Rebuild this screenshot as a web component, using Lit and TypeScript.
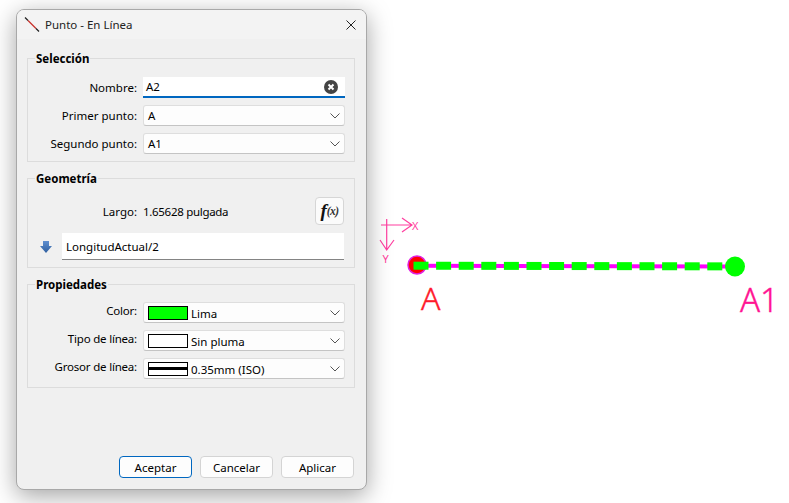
import { LitElement, html, css, svg } from "lit";
import { customElement } from "lit/decorators.js";

const chevron = html`<svg class="chev" width="10" height="6" viewBox="0 0 10 6"><path d="M0.5 0.5 L5 5 L9.5 0.5" fill="none" stroke="#555" stroke-width="1"/></svg>`;

const dashes: number[] = [];
for (let i = 0; i < 14; i++) dashes.push(413.5 + i * 22.6);

@customElement("app-root")
export class AppRoot extends LitElement {
  static styles = css`
    :host { display: block; width: 789px; height: 503px; position: relative; overflow: hidden; background: #fff;
      font-family: "Noto Sans", "Open Sans", sans-serif; font-size: 11.5px; color: #000; }
    .canvas { position: absolute; left: 0; top: 0; }
    .stage { position: relative; padding: 9px 0 0 16px; }
    .window { width: 351px; height: 481px; box-sizing: border-box; display: flex; flex-direction: column; background: #f0f0f0;
      border: 1px solid #a8a8a8; border-radius: 8px; box-shadow: 0 6px 24px rgba(0,0,0,.36); overflow: hidden; }
    .titlebar { height: 29px; box-sizing: border-box; flex: none; display: flex; align-items: center; background: #f3f3f3; padding: 0 10px 0 7px; gap: 5px; color: #222; }
    .titlebar .t { flex: 1; padding-bottom: 1px; }
    .body { flex: 1; display: flex; flex-direction: column; padding: 19px 11px 11px 10px; gap: 16px; }
    .group { border: 1px solid #dcdcdc; padding: 0 10px 7px 0; }
    .gt { height: 16px; line-height: 16px; margin: -8px 0 10px 7px; padding: 0 1px; width: fit-content; background: #f0f0f0; font-weight: 700; }
    .props { padding-bottom: 8px; }
    .props .gt { margin-bottom: 9px; }
    .rows { display: flex; flex-direction: column; gap: 7px; }
    .row { display: grid; grid-template-columns: 109px 202px; column-gap: 6px; align-items: center; height: 21px; }
    .lab { text-align: right; white-space: nowrap; }
    .val { text-align: left; white-space: nowrap; letter-spacing: -0.3px; }
    .props .lab { padding-bottom: 4px; letter-spacing: -0.2px; }
    .props .v { padding-top: 2px; }
    .combo { height: 21px; box-sizing: border-box; display: flex; align-items: center; gap: 3px; background: #fdfdfd; border: 1px solid #dedede; border-bottom-color: #c4c4c4;
      border-radius: 3px; padding: 0 3px 0 4px; }
    .combo .v { flex: 1; }
    .chev { margin-right: 1px; }
    .input { height: 21px; box-sizing: border-box; display: flex; align-items: center; background: #fff; border-bottom: 2px solid #0067c0; padding: 0 7px 0 3px; }
    .input .v { flex: 1; }
    .swatch { width: 38px; height: 12px; border: 1px solid #000; flex: none; background: #fff; }
    .lime { background: #00ff00; }
    .thick { display: flex; align-items: center; }
    .thick i { display: block; width: 100%; height: 3px; background: #000; }
    .georow { display: grid; grid-template-columns: 109px 1fr 29px; column-gap: 6px; align-items: center; height: 28px; }
    .fx { width: 29px; height: 28px; box-sizing: border-box; display: flex; align-items: center; justify-content: center; background: #fbfbfb; border: 1px solid #d6d6d6; border-radius: 4px;
      font-family: "Liberation Serif", serif; font-weight: 700; font-style: italic; font-size: 19px; color: #111; }
    .fx small { font-size: 11.5px; color: #333; letter-spacing: -0.5px; }
    .formrow { display: grid; grid-template-columns: 12px 282px; column-gap: 10px; align-items: center; padding-left: 12px; margin-top: 8px; }
    .forminput { height: 27px; box-sizing: border-box; background: #fff; border-bottom: 1px solid #848484; padding: 0 4px; display: flex; align-items: center; }
    .foot { margin-top: auto; display: flex; justify-content: flex-end; gap: 8px; padding-right: 1px; }
    .btn { width: 73px; height: 22px; box-sizing: border-box; display: flex; align-items: center; justify-content: center; background: #fdfdfd; border: 1px solid #d4d4d4; border-radius: 4px; }
    .btn.def { border-color: #0067c0; }
    .lbl { font-family: "Noto Sans", sans-serif; }
  `;

  render() {
    return html`
      <svg class="canvas" width="789" height="503" viewBox="0 0 789 503">
        <g stroke="#ff3fa0" stroke-width="1.2" fill="none">
          <path d="M381 225 H412 M402 218 L412 225 L402 232"/>
          <path d="M386.7 219 V250 M380 240 L386.7 250 L394 240"/>
        </g>
        <text class="lbl" x="412" y="229.500" font-size="11" fill="#ff3fa0">X</text>
        <text class="lbl" x="382.500" y="263" font-size="11" fill="#ff3fa0">Y</text>
        <circle cx="417" cy="265" r="9" fill="#f00" stroke="#e020e0" stroke-width="1.500"/>
        <path d="M417 265.700 L735 266.400" stroke="#ff00ff" stroke-width="4"/>
        ${dashes.map((x, i) => svg`<rect x=${x} y=${261.7 + i * 0.05} width="15" height="8" fill="#00ff00"/>`)}
        <circle cx="735" cy="266.500" r="10" fill="#00ff00"/>
        <text class="lbl" x="421" y="310" font-size="32" font-weight="300" fill="#ff1a2a" stroke="#ff1a2a" stroke-width="0.4">A</text>
        <text class="lbl" x="740" y="312" font-size="33" font-weight="300" fill="#ff1493" stroke="#ff1493" stroke-width="0.4">A1</text>
      </svg>
      <div class="stage">
        <div class="window">
          <div class="titlebar">
            <svg width="16" height="16" viewBox="0 0 16 16"><path d="M1 0.500 L4 3.500" stroke="#222" stroke-width="1.300"/><path d="M4 3.500 L12 11.500" stroke="#c8302a" stroke-width="1.300"/><path d="M12 11.500 L15 14.500" stroke="#222" stroke-width="1.300"/></svg>
            <span class="t">Punto - En Línea</span>
            <svg width="10" height="10" viewBox="0 0 10 10"><path d="M0.500 0.500 L9.500 9.500 M9.500 0.500 L0.500 9.500" stroke="#222" stroke-width="1"/></svg>
          </div>
          <div class="body">
            <div class="group">
              <div class="gt">Selección</div>
              <div class="rows">
                <div class="row"><span class="lab">Nombre:</span>
                  <div class="input"><span class="v">A2</span>
                    <svg width="14" height="14" viewBox="0 0 14 14"><circle cx="7" cy="7" r="7" fill="#444"/><path d="M4.500 4.500 L9.500 9.500 M9.500 4.500 L4.500 9.500" stroke="#fff" stroke-width="2"/></svg>
                  </div></div>
                <div class="row"><span class="lab">Primer punto:</span><div class="combo"><span class="v">A</span>${chevron}</div></div>
                <div class="row"><span class="lab">Segundo punto:</span><div class="combo"><span class="v">A1</span>${chevron}</div></div>
              </div>
            </div>
            <div class="group">
              <div class="gt">Geometría</div>
              <div class="georow"><span class="lab">Largo:</span><span class="val">1.65628 pulgada</span>
                <div class="fx">f<small>(x)</small></div></div>
              <div class="formrow">
                <svg width="12" height="12" viewBox="0 0 12 12"><defs><linearGradient id="ag" x1="0" y1="0" x2="0" y2="1"><stop offset="0" stop-color="#5f8fd0"/><stop offset="1" stop-color="#2f5f9f"/></linearGradient></defs><path d="M3 0 H9 V5 H12 L6 12 L0 5 H3 Z" fill="url(#ag)"/></svg>
                <div class="forminput">LongitudActual/2</div>
              </div>
            </div>
            <div class="group props">
              <div class="gt">Propiedades</div>
              <div class="rows">
                <div class="row"><span class="lab">Color:</span><div class="combo"><span class="swatch lime"></span><span class="v">Lima</span>${chevron}</div></div>
                <div class="row"><span class="lab">Tipo de línea:</span><div class="combo"><span class="swatch"></span><span class="v">Sin pluma</span>${chevron}</div></div>
                <div class="row"><span class="lab">Grosor de línea:</span><div class="combo"><span class="swatch thick"><i></i></span><span class="v">0.35mm (ISO)</span>${chevron}</div></div>
              </div>
            </div>
            <div class="foot">
              <div class="btn def">Aceptar</div><div class="btn">Cancelar</div><div class="btn">Aplicar</div>
            </div>
          </div>
        </div>
      </div>
    `;
  }
}
